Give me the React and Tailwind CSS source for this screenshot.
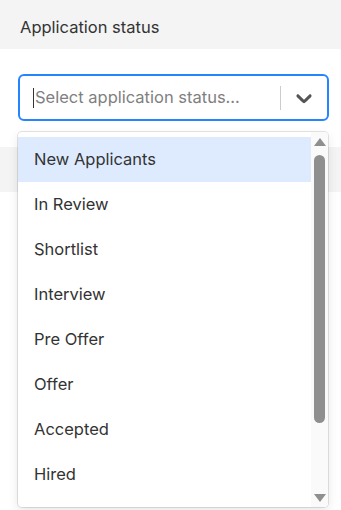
const statuses = [
  "New Applicants",
  "In Review",
  "Shortlist",
  "Interview",
  "Pre Offer",
  "Offer",
  "Accepted",
  "Hired",
];

function Chevron() {
  return (
    <svg width="26" height="26" viewBox="0 0 20 20" className="fill-[#555]">
      <path d="M4.516 7.548c0.436-0.446 1.043-0.481 1.576 0l3.908 3.747 3.908-3.747c0.533-0.481 1.141-0.446 1.574 0 0.436 0.445 0.408 1.197 0 1.615-0.406 0.418-4.695 4.502-4.695 4.502-0.217 0.223-0.502 0.335-0.787 0.335s-0.57-0.112-0.789-0.335c0 0-4.287-4.084-4.695-4.502s-0.436-1.17 0-1.615z" />
    </svg>
  );
}

function Scrollbar() {
  return (
    <div className="flex w-[17px] shrink-0 flex-col items-center bg-[#fafafa] pt-[6px] pb-[5px]">
      <div className="h-0 w-0 border-x-[6px] border-b-[8px] border-x-transparent border-b-[#8f8f8f]" />
      <div className="mt-[9px] h-[268px] w-[11px] rounded-full bg-[#8f8f8f]" />
      <div className="flex-1" />
      <div className="h-0 w-0 border-x-[6px] border-t-[8px] border-x-transparent border-t-[#8f8f8f]" />
    </div>
  );
}

export default function App() {
  return (
    <div className="relative h-[510px] w-[341px] overflow-hidden bg-white font-['Inter',sans-serif] text-[#333]">
      <div className="flex h-[49px] items-center bg-[#f4f4f4] px-5 pt-[5px] text-[16.5px]">
        Application status
      </div>

      <div className="relative ml-[18px] mt-[25px] w-[311px]">
        <div className="flex h-[47px] items-center rounded-[6px] border-2 border-[#2684ff] bg-white">
          <div className="flex flex-1 items-center pl-[13px] text-[16.5px] text-[#808080]">
            <span className="mr-[1px] h-[20px] w-[1px] bg-[#333]" />
            Select application status...
          </div>
          <div className="h-[24px] w-[1px] bg-[#cccccc]" />
          <div className="flex w-[46px] items-center justify-center">
            <Chevron />
          </div>
        </div>

        <div className="absolute left-0 top-[58px] z-10 flex h-[375px] w-[310px] overflow-hidden rounded-[4px] bg-white shadow-[0_0_0_1px_rgba(0,0,0,0.1),0_4px_11px_rgba(0,0,0,0.1)]">
          <div className="flex-1 overflow-hidden pt-[5px]">
            {statuses.map((status, i) => (
              <div
                key={status}
                className={`flex h-[45px] items-center pl-4 text-[16.5px] ${i === 0 ? "bg-[#deebff]" : ""}`}
              >
                {status}
              </div>
            ))}
          </div>
          <Scrollbar />
        </div>
      </div>

      <div className="mt-[26px] h-[45px] bg-[#f4f4f4]" />
    </div>
  );
}
